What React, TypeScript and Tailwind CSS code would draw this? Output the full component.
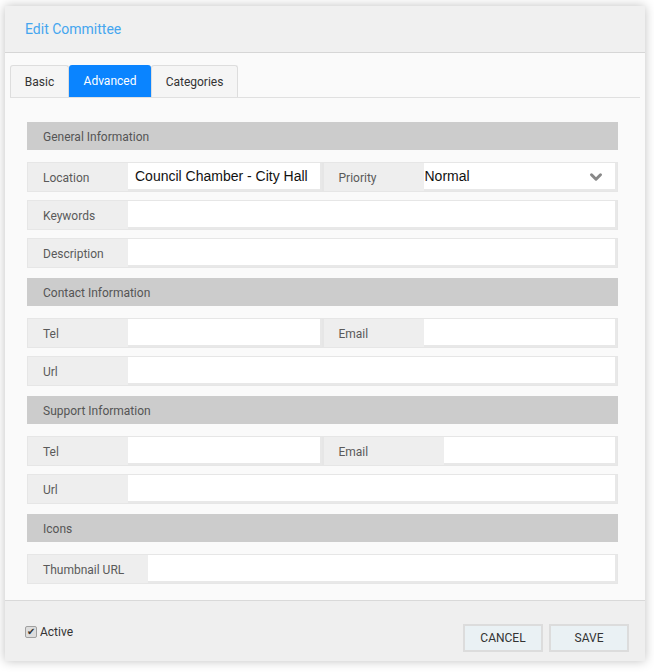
import { ChevronDown } from "lucide-react";

const font = "font-['Roboto','Liberation_Sans',sans-serif]";

type FieldProps = {
  label: string;
  labelW?: string;
  value?: string;
  select?: boolean;
};

function Field({ label, labelW = "w-[100px]", value = "", select = false }: FieldProps) {
  return (
    <div className="flex h-[30px] border border-[#e6e6e6] bg-[#f6f6f6]">
      <div className={`${labelW} shrink-0 bg-[#eeeeee] pl-[15px] pt-[1px] flex items-center text-[12px] text-[#5a5a5a]`}>
        {label}
      </div>
      <div className="flex-1 flex items-center bg-white border-r-2 border-b-2 border-[#e8e8e8] font-['Liberation_Sans',Arial,sans-serif] text-[14px] text-[#111]">
        {select ? (
          <div className="flex flex-1 items-center justify-between pl-[1px] pr-[10px] pt-[1px]">
            <span>{value}</span>
            <ChevronDown className="h-[18px] w-[18px] text-[#888]" strokeWidth={4} />
          </div>
        ) : (
          <span className="pl-[7px] pt-[1px]">{value}</span>
        )}
      </div>
    </div>
  );
}

function Section({ title }: { title: string }) {
  return (
    <div className="h-[28px] bg-[#cccccc] pl-[16px] pt-[1px] flex items-center text-[12px] text-[#555]">
      {title}
    </div>
  );
}

export default function App() {
  return (
    <div className={`w-[654px] h-[672px] bg-white pt-[6px] pl-[5px] ${font}`}>
      <div className="w-[640px] shadow-[0_0_10px_rgba(0,0,0,0.25)]">
        {/* Header */}
        <div className="h-[47px] bg-[#f0f0f0] border-b border-[#d6d6d6] pl-[20px] flex items-center">
          <span className="text-[14px] text-[#45a6ef]">Edit Committee</span>
        </div>

        {/* Body */}
        <div className="bg-[#fafafa] pt-[12px] pb-[16px]">
          <div className="mx-[5px] flex h-[33px] border-b border-[#e0e0e0] text-[12px]">
            <div className="w-[59px] flex items-center justify-center bg-[#f5f5f5] border border-[#dddddd] border-b-0 rounded-t-[3px] text-[#333]">
              Basic
            </div>
            <div className="w-[82px] flex items-center justify-center bg-[#0a84ff] rounded-t-[3px] text-white">
              Advanced
            </div>
            <div className="w-[87px] flex items-center justify-center bg-[#f5f5f5] border border-[#dddddd] border-b-0 rounded-t-[3px] text-[#333]">
              Categories
            </div>
          </div>

          <div className="ml-[22px] w-[591px] mt-[24px] flex flex-col">
            <Section title="General Information" />
            <div className="mt-[12px] flex flex-col gap-[8px]">
              <div className="grid grid-cols-2">
                <Field label="Location" value="Council Chamber - City Hall" />
                <Field label="Priority" value="Normal" select />
              </div>
              <Field label="Keywords" />
              <Field label="Description" />
            </div>

            <div className="mt-[10px]">
              <Section title="Contact Information" />
            </div>
            <div className="mt-[12px] flex flex-col gap-[8px]">
              <div className="grid grid-cols-2">
                <Field label="Tel" />
                <Field label="Email" />
              </div>
              <Field label="Url" />
            </div>

            <div className="mt-[10px]">
              <Section title="Support Information" />
            </div>
            <div className="mt-[12px] flex flex-col gap-[8px]">
              <div className="grid grid-cols-2">
                <Field label="Tel" />
                <Field label="Email" labelW="w-[120px]" />
              </div>
              <Field label="Url" />
            </div>

            <div className="mt-[10px]">
              <Section title="Icons" />
            </div>
            <div className="mt-[12px]">
              <Field label="Thumbnail URL" labelW="w-[120px]" />
            </div>
          </div>
        </div>

        {/* Footer */}
        <div className="h-[61px] bg-[#efefef] border-t border-[#d9d9d9] flex items-start justify-between pl-[20px] pr-[16px]">
          <label className="mt-[22px] flex items-center gap-[3px] text-[12px] text-[#333]">
            <span className="w-[12px] h-[12px] rounded-[2px] border border-[#a0a0a0] bg-[#dddddd] flex items-center justify-center text-[10px] leading-none text-[#333]">
              ✔
            </span>
            Active
          </label>
          <div className="mt-[23px] flex gap-[6px]">
            <button className="w-[80px] h-[28px] bg-[#eaf1f4] border-2 border-[#dcdcdc] text-[12px] text-[#333]">
              CANCEL
            </button>
            <button className="w-[80px] h-[28px] bg-[#eaf1f4] border-2 border-[#dcdcdc] text-[12px] text-[#333]">
              SAVE
            </button>
          </div>
        </div>
      </div>
    </div>
  );
}
